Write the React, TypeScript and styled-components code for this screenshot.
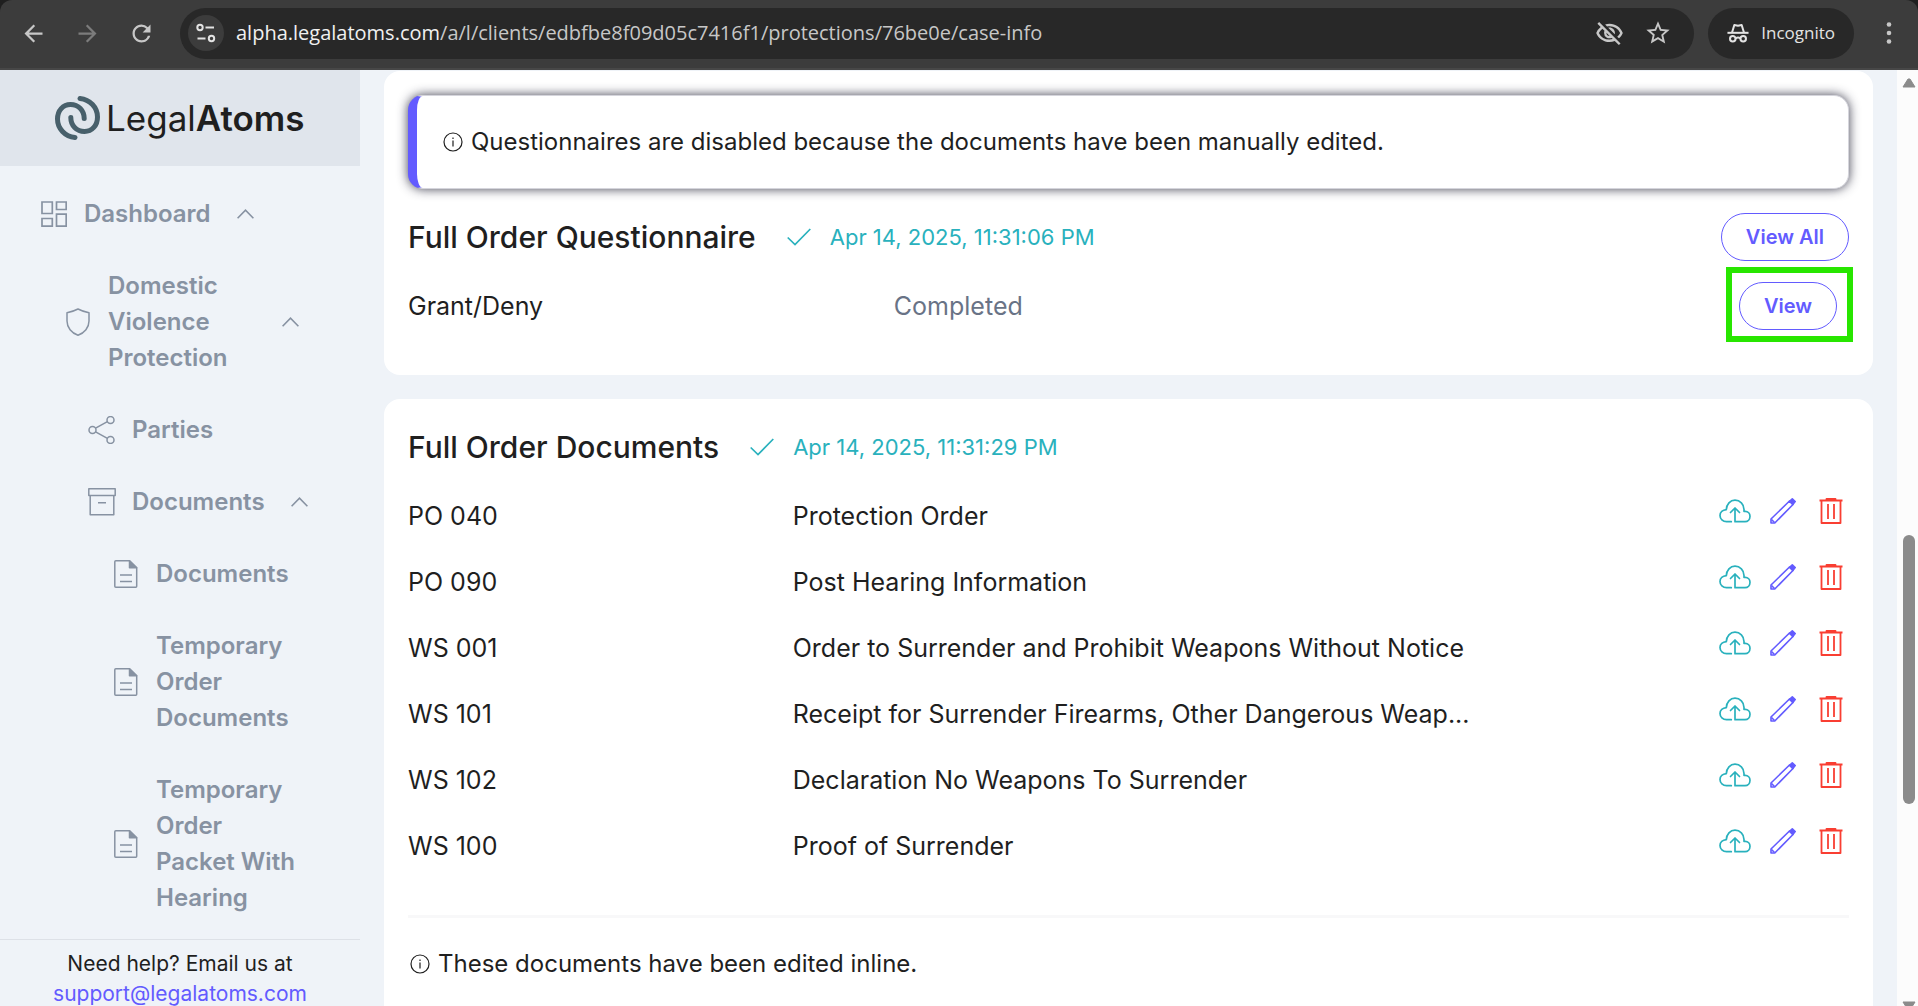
import React from "react";
import styled, { createGlobalStyle } from "styled-components";
import {
  MdArrowBack,
  MdArrowForward,
  MdOutlineVisibilityOff,
  MdRefresh,
  MdStarBorder,
} from "react-icons/md";

const color = {
  accent: "#635bff",
  teal: "#29b1bd",
  danger: "#f93e32",
  ink: "#1f1f1f",
  muted: "#8792a2",
  status: "#697386",
  page: "#eff3f8",
};

const GlobalStyle = createGlobalStyle`
  *, *::before, *::after { box-sizing: border-box; }
  body {
    margin: 0;
    background: ${color.page};
    color: ${color.ink};
    font-family: Inter, "Liberation Sans", sans-serif;
    font-size: 24px;
    line-height: 36px;
    overflow: hidden;
  }
  button { font: inherit; cursor: pointer; }
  a { text-decoration: none; color: inherit; }
  svg { display: block; flex: none; }
`;

/* ---------- browser bar ---------- */

const Window = styled.div`
  display: flex;
  flex-direction: column;
  height: 100vh;
`;

const BrowserBar = styled.header`
  display: flex;
  align-items: center;
  flex: none;
  height: 70px;
  padding: 0 18px 2px 15px;
  background: #3c3c3c;
  border-bottom: 2px solid #474747;
  border-radius: 12px 12px 0 0;
  font-family: "Open Sans", "Noto Sans", sans-serif;
  font-size: 20px;
  line-height: 28px;
  color: #c7c7c7;
`;

const BarBackdrop = styled.div`
  flex: none;
  background: #1f1f1f;
`;

const BarButton = styled.button<{ $dim?: boolean }>`
  display: flex;
  align-items: center;
  justify-content: center;
  width: 36px;
  height: 36px;
  margin-right: 18px;
  padding: 0;
  border: 0;
  border-radius: 50%;
  background: none;
  color: ${(p) => (p.$dim ? "#7c7c7c" : "#c7c7c7")};
`;

const Omnibox = styled.div`
  display: flex;
  align-items: center;
  flex: 1;
  min-width: 0;
  height: 51px;
  margin-left: 3px;
  padding: 0 22px 0 8px;
  border-radius: 26px;
  background: #282828;
`;

const SiteInfo = styled.button`
  display: flex;
  align-items: center;
  justify-content: center;
  width: 36px;
  height: 36px;
  padding: 0;
  border: 0;
  border-radius: 50%;
  background: #3c3c3c;
  color: #e3e3e3;
`;

const Address = styled.div`
  flex: 1;
  min-width: 0;
  margin-left: 12px;
  overflow: hidden;
  white-space: nowrap;
`;

const Domain = styled.span`
  color: #f0f0f0;
`;

const OmniboxButton = styled.button`
  display: flex;
  padding: 0;
  margin-left: 20px;
  border: 0;
  background: none;
  color: #c7c7c7;
`;

const IncognitoChip = styled.button`
  display: flex;
  align-items: center;
  gap: 12px;
  height: 51px;
  margin: 0 24px 0 14px;
  padding: 0 19px;
  border: 0;
  border-radius: 26px;
  background: #282828;
  color: #e3e3e3;

  && {
    font-size: 17px;
  }
`;

const MenuButton = styled.button`
  display: flex;
  justify-content: center;
  width: 22px;
  padding: 0;
  border: 0;
  background: none;
  color: #c7c7c7;
`;

/* ---------- page frame ---------- */

const Page = styled.div`
  display: flex;
  flex: 1;
  min-height: 0;
`;

const Sidebar = styled.aside`
  display: flex;
  flex-direction: column;
  flex: none;
  width: 360px;
`;

const Brand = styled.a`
  display: flex;
  align-items: center;
  flex: none;
  gap: 6px;
  height: 96px;
  padding-left: 55px;
  background: #e0e5ec;
  font-size: 35px;
  font-weight: 400;
  line-height: 48px;

  strong {
    font-weight: 600;
  }
`;

const Nav = styled.nav`
  flex: 1;
  min-height: 0;
  padding-top: 12px;
  overflow: hidden;
`;

const NavItem = styled.a<{ $level: number }>`
  display: flex;
  align-items: center;
  padding: 18px 0 18px ${(p) => 40 + p.$level * 24}px;
  color: ${color.muted};
  font-weight: 600;
`;

const NavIcon = styled.span`
  display: flex;
  justify-content: center;
  flex: none;
  width: 28px;
  margin-right: 16px;
`;

const NavLabel = styled.span`
  max-width: 148px;
  margin-right: 26px;
`;

const Help = styled.footer`
  flex: none;
  height: 67px;
  padding-top: 9px;
  border-top: 1px solid #dde1e7;
  font-size: 21px;
  line-height: 30px;
  text-align: center;

  a {
    display: block;
    color: ${color.accent};
  }
`;

const Main = styled.main`
  display: flex;
  flex-direction: column;
  flex: 1;
  gap: 24px;
  min-width: 0;
  padding: 1px 24px 0;
  overflow: hidden;
`;

const ScrollTrack = styled.div`
  display: flex;
  flex-direction: column;
  align-items: center;
  flex: none;
  width: 21px;
  margin-bottom: -6px;
  padding: 7px 0 0 2px;
  background: #fcfcfc;
  color: #8b8b8b;
`;

const ScrollLane = styled.div`
  display: grid;
  grid-template-rows: 447fr 269fr 197fr;
  flex: 1;
  width: 12px;
`;

const ScrollThumb = styled.div`
  grid-row: 2;
  border-radius: 6px;
  background: #8b8b8b;
`;

/* ---------- cards ---------- */

const Card = styled.section<{ $grow?: boolean }>`
  flex: ${(p) => (p.$grow ? "1 0 auto" : "none")};
  padding: 24px 24px 45px;
  border-radius: 16px;
  background: #fff;
`;

const Alert = styled.div`
  margin-bottom: 24px;
  padding: 28px 24px 28px 26px;
  border: 1px solid #d5d5dc;
  border-left: 9px solid ${color.accent};
  border-radius: 15px;
  background: #fff;
  box-shadow: 0 0 11px rgba(30, 30, 50, 0.85);
`;

const Note = styled.p<{ $inset?: boolean }>`
  display: flex;
  align-items: center;
  gap: 8px;
  margin: 0;
  padding-left: ${(p) => (p.$inset ? 2 : 0)}px;
`;

const CardHeader = styled.div`
  display: flex;
  align-items: center;
  height: 48px;
`;

const Title = styled.h2`
  margin: 0 31px 0 0;
  font-size: 30px;
  font-weight: 500;
  line-height: 36px;
`;

const Stamp = styled.div`
  display: flex;
  align-items: center;
  gap: 19px;
  margin-right: auto;
  color: ${color.teal};
  font-size: 22px;
`;

const PillButton = styled.button`
  height: 48px;
  padding: 0 24px;
  border: 1px solid ${color.accent};
  border-radius: 24px;
  background: #fff;
  color: ${color.accent};

  && {
    font-size: 20px;
    font-weight: 600;
  }
`;

const FormRow = styled.div`
  display: grid;
  grid-template-columns: 34% 1fr auto;
  align-items: center;
  margin-top: 21px;
  padding-right: 12px;
  font-size: 25px;
`;

const Status = styled.span`
  color: ${color.status};
`;

const Spotlight = styled.div`
  position: relative;

  &::after {
    content: "";
    position: absolute;
    inset: -15px -16px -12px -13px;
    border: 6px solid #28e600;
    pointer-events: none;
  }
`;

const DocTable = styled.table`
  width: 100%;
  margin-top: 12px;
  border-collapse: collapse;
  table-layout: fixed;
  font-size: 25px;
`;

const DocCell = styled.td<{ $width: string }>`
  width: ${(p) => p.$width};
  height: 66px;
  padding: 0;
  white-space: nowrap;
`;

const Actions = styled.div`
  display: flex;
  justify-content: flex-end;
  gap: 12px;
  padding-bottom: 10px;
`;

const ActionButton = styled.button<{ $color: string }>`
  display: flex;
  align-items: center;
  justify-content: center;
  width: 36px;
  height: 36px;
  padding: 0;
  border: 0;
  background: none;
  color: ${(p) => p.$color};
`;

const Divider = styled.hr`
  height: 3px;
  margin: 36px 0 28px;
  border: 0;
  background: #f8f8f9;
`;

/* ---------- drawings ---------- */

const TuneIcon = () => (
  <svg width="20" height="20" viewBox="0 0 20 20" fill="none" stroke="currentColor" strokeWidth="2">
    <circle cx="4" cy="4.5" r="2.7" />
    <path d="M9.5 4.5H18M1.5 15.5H9.5" />
    <circle cx="15.5" cy="15.5" r="2.7" />
  </svg>
);

const IncognitoIcon = () => (
  <svg width="22" height="22" viewBox="0 0 24 22" fill="none" stroke="currentColor" strokeWidth="2.2">
    <path d="M0.500 10.800H23.500" />
    <path d="M5.500 10.500L8 2.200L12 3.200L16 2.200L18.500 10.500" strokeLinejoin="round" />
    <circle cx="6.300" cy="17.200" r="3" />
    <circle cx="17.700" cy="17.200" r="3" />
    <path d="M9.300 17C10.700 15.900 13.300 15.900 14.700 17" />
  </svg>
);

const DotsIcon = () => (
  <svg width="6" height="24" viewBox="0 0 6 24" fill="currentColor">
    <circle cx="3" cy="3.500" r="2.300" />
    <circle cx="3" cy="12" r="2.300" />
    <circle cx="3" cy="20.500" r="2.300" />
  </svg>
);

const LogoMark = () => (
  <svg width="45" height="44" viewBox="0 0 45 44" fill="none" stroke="#48606b" strokeWidth="5" strokeLinecap="round">
    <path d="M25 2.500C35 3.500 42.500 11.500 42.500 21C42.500 29.500 37 35.500 29.500 35.500C21.500 35.500 15.800 29.500 15.800 21.500" />
    <path d="M20 41.500C10 40.500 2.500 32.500 2.500 23C2.500 14.500 8 8.500 15.500 8.500C23.500 8.500 29.200 14.500 29.200 22.500" />
  </svg>
);

const DashboardIcon = () => (
  <svg width="26" height="26" viewBox="0 0 26 26" fill="none" stroke="currentColor" strokeWidth="1.700">
    <path d="M1 1H11.300V12.500H1zM15.500 1H25.200V8.500H15.500zM1 17.500H11.300V25.200H1zM15.500 13.200H25.200V25.200H15.500z" />
  </svg>
);

const ShieldIcon = () => (
  <svg width="24" height="28" viewBox="0 0 24 28" fill="none" stroke="currentColor" strokeWidth="1.500" strokeLinejoin="round">
    <path d="M12 1C8.500 2.800 5 4 1 4.800V13C1 19.500 5.500 25 12 27.200C18.500 25 23 19.500 23 13V4.800C19 4 15.500 2.800 12 1z" />
  </svg>
);

const ShareIcon = () => (
  <svg width="28" height="28" viewBox="0 0 28 28" fill="none" stroke="currentColor" strokeWidth="1.500">
    <circle cx="4.500" cy="14" r="3.500" />
    <circle cx="22.500" cy="4" r="3.500" />
    <circle cx="22.500" cy="24" r="3.500" />
    <path d="M7.600 12.200L19.400 5.700M7.600 15.800L19.400 22.300" />
  </svg>
);

const ArchiveIcon = () => (
  <svg width="28" height="28" viewBox="0 0 28 28" fill="none" stroke="currentColor" strokeWidth="1.500" strokeLinejoin="round">
    <path d="M0.800 0.800H27.200V7.500H0.800zM2.200 7.500V26.800H25.800V7.500M10 14.700H18" />
  </svg>
);

const DocIcon = () => (
  <svg width="24" height="28" viewBox="0 0 24 28" fill="none" stroke="currentColor" strokeWidth="1.500" strokeLinejoin="round">
    <path d="M15.500 0.800H1.800C1.200 0.800 0.800 1.200 0.800 1.800V26.200C0.800 26.800 1.200 27.200 1.800 27.200H21.800C22.300 27.200 22.700 26.800 22.700 26.200V7.800z" />
    <path d="M15.500 0.800V7.800H22.700z" fill="currentColor" />
    <path d="M6 15H18M6 21.500H18" />
  </svg>
);

const ChevronUp = () => (
  <svg width="17" height="10" viewBox="0 0 17 10" fill="none" stroke="currentColor" strokeWidth="1.600">
    <path d="M0.600 9.200L8.500 1.200L16.400 9.200" />
  </svg>
);

const InfoIcon = () => (
  <svg width="20" height="20" viewBox="0 0 20 20" fill="none" stroke="currentColor" strokeWidth="1.200">
    <circle cx="10" cy="10" r="9" />
    <path d="M10 8.500V14.500M10 5.500V7" />
  </svg>
);

const CheckIcon = () => (
  <svg width="24" height="18" viewBox="0 0 24 18" fill="none" stroke="currentColor" strokeWidth="1.700">
    <path d="M0.700 9.500L8 16.500L23.300 1" />
  </svg>
);

const CloudUploadIcon = () => (
  <svg width="32" height="24" viewBox="0 0 32 24" fill="none" stroke="currentColor" strokeWidth="1.700" strokeLinecap="round" strokeLinejoin="round">
    <path d="M12.300 22.700H7.500C3.900 22.700 1 20 1 16.600C1 13.200 3.700 10.900 7.300 10.600C7.600 5.200 11.200 1.200 16 1.200C21 1.200 25 5.300 25 10.400V12.300H26.200C29 12.300 31 14.500 31 17.300C31 20.300 28.900 22.700 26 22.700H16V9.500" />
    <path d="M11.500 13.500L16 9L20.500 13.500" />
  </svg>
);

const PencilIcon = () => (
  <svg width="26" height="26" viewBox="0 0 26 26" fill="none" stroke="currentColor" strokeWidth="1.600" strokeLinejoin="round">
    <path d="M1 25V21L19.500 3L23 6.500L4.800 25z" />
    <path d="M1.500 21.500L4.500 24.500" />
    <path d="M19.500 3.300L22.300 0.900L25.200 3.600L22.800 6.500z" fill="currentColor" />
  </svg>
);

const TrashIcon = () => (
  <svg width="24" height="26" viewBox="0 0 24 26" fill="none" stroke="currentColor" strokeWidth="1.800" strokeLinejoin="round">
    <path d="M0.500 2.500H23.500M7.500 2V0.900H16.500V2M2.500 2.500V25H21.500V2.500M9 6V21M15 6V21" />
  </svg>
);

const ScrollArrow = ({ down }: { down?: boolean }) => (
  <svg width="14" height="11" viewBox="0 0 14 11" fill="currentColor" stroke="currentColor" strokeLinejoin="round">
    <path d={down ? "M1 1H13L8 9H6z" : "M1 10H13L8 2H6z"} />
  </svg>
);

/* ---------- data ---------- */

type NavEntry = { label: string; level: number; icon: React.FC; open?: boolean };

const navEntries: NavEntry[] = [
  { label: "Dashboard", level: 0, icon: DashboardIcon, open: true },
  { label: "Domestic Violence Protection", level: 1, icon: ShieldIcon, open: true },
  { label: "Parties", level: 2, icon: ShareIcon },
  { label: "Documents", level: 2, icon: ArchiveIcon, open: true },
  { label: "Documents", level: 3, icon: DocIcon },
  { label: "Temporary Order Documents", level: 3, icon: DocIcon },
  { label: "Temporary Order Packet With Hearing", level: 3, icon: DocIcon },
];

const documents = [
  ["PO 040", "Protection Order"],
  ["PO 090", "Post Hearing Information"],
  ["WS 001", "Order to Surrender and Prohibit Weapons Without Notice"],
  ["WS 101", "Receipt for Surrender Firearms, Other Dangerous Weap..."],
  ["WS 102", "Declaration No Weapons To Surrender"],
  ["WS 100", "Proof of Surrender"],
];

const Chrome = () => (
  <BarBackdrop>
    <BrowserBar>
      <BarButton aria-label="Back"><MdArrowBack size={27} /></BarButton>
      <BarButton aria-label="Forward" $dim><MdArrowForward size={27} /></BarButton>
      <BarButton aria-label="Reload"><MdRefresh size={27} /></BarButton>
      <Omnibox>
        <SiteInfo aria-label="Site information"><TuneIcon /></SiteInfo>
        <Address>
          <Domain>alpha.legalatoms.com</Domain>
          /a/l/clients/edbfbe8f09d05c7416f1/protections/76be0e/case-info
        </Address>
        <OmniboxButton aria-label="Tracking protection"><MdOutlineVisibilityOff size={29} /></OmniboxButton>
        <OmniboxButton aria-label="Bookmark"><MdStarBorder size={28} /></OmniboxButton>
      </Omnibox>
      <IncognitoChip><IncognitoIcon />Incognito</IncognitoChip>
      <MenuButton aria-label="Menu"><DotsIcon /></MenuButton>
    </BrowserBar>
  </BarBackdrop>
);

const SideNav = () => (
  <Sidebar>
    <Brand href="#">
      <LogoMark />
      <span>Legal<strong>Atoms</strong></span>
    </Brand>
    <Nav>
      {navEntries.map(({ label, level, icon: Icon, open }) => (
        <NavItem key={`${level}-${label}`} href="#" $level={level}>
          <NavIcon><Icon /></NavIcon>
          <NavLabel>{label}</NavLabel>
          {open && <ChevronUp />}
        </NavItem>
      ))}
    </Nav>
    <Help>
      Need help? Email us at
      <a href="mailto:support@legalatoms.com">support@legalatoms.com</a>
    </Help>
  </Sidebar>
);

export default function App() {
  return (
    <Window>
      <GlobalStyle />
      <Chrome />
      <Page>
        <SideNav />
        <Main>
          <Card>
            <Alert>
              <Note>
                <InfoIcon />
                Questionnaires are disabled because the documents have been manually edited.
              </Note>
            </Alert>
            <CardHeader>
              <Title>Full Order Questionnaire</Title>
              <Stamp><CheckIcon />Apr 14, 2025, 11:31:06 PM</Stamp>
              <PillButton>View All</PillButton>
            </CardHeader>
            <FormRow>
              <span>Grant/Deny</span>
              <Status>Completed</Status>
              <Spotlight><PillButton>View</PillButton></Spotlight>
            </FormRow>
          </Card>
          <Card $grow>
            <CardHeader>
              <Title>Full Order Documents</Title>
              <Stamp><CheckIcon />Apr 14, 2025, 11:31:29 PM</Stamp>
            </CardHeader>
            <DocTable>
              <tbody>
                {documents.map(([code, name]) => (
                  <tr key={code}>
                    <DocCell $width="26.7%">{code}</DocCell>
                    <DocCell $width="60%">{name}</DocCell>
                    <DocCell $width="13.3%">
                      <Actions>
                        <ActionButton aria-label={`Upload ${code}`} $color={color.teal}><CloudUploadIcon /></ActionButton>
                        <ActionButton aria-label={`Edit ${code}`} $color={color.accent}><PencilIcon /></ActionButton>
                        <ActionButton aria-label={`Delete ${code}`} $color={color.danger}><TrashIcon /></ActionButton>
                      </Actions>
                    </DocCell>
                  </tr>
                ))}
              </tbody>
            </DocTable>
            <Divider />
            <Note $inset>
              <InfoIcon />
              These documents have been edited inline.
            </Note>
          </Card>
        </Main>
        <ScrollTrack>
          <ScrollArrow />
          <ScrollLane><ScrollThumb /></ScrollLane>
          <ScrollArrow down />
        </ScrollTrack>
      </Page>
    </Window>
  );
}
